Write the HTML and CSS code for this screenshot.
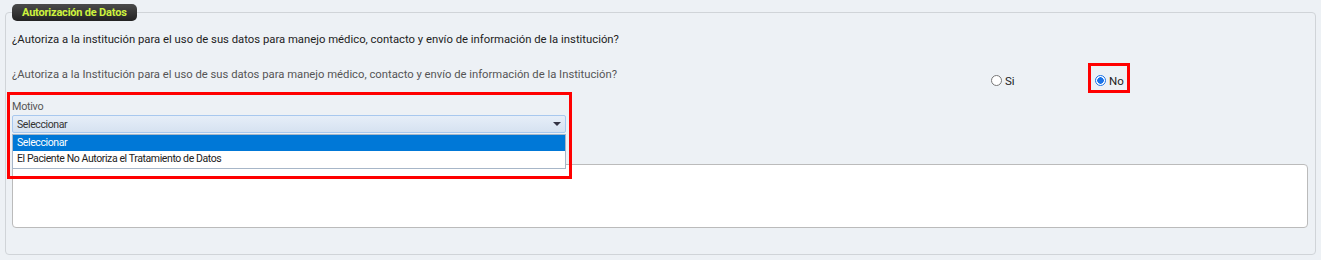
FILE: index.html
```html
<!DOCTYPE html>
<html lang="es">
<head>
    <meta charset="UTF-8">
    <meta name="viewport" content="width=device-width, initial-scale=1.0">
    <title>Autorización de Datos</title>
    <link rel="stylesheet" href="styles.css">
</head>
<body>
    <fieldset class="panel">
        <legend class="panel-title">Autorización de Datos</legend>

        <p class="question">¿Autoriza a la institución para el uso de sus datos para manejo médico, contacto y envío de información de la institución?</p>

        <div class="consent-row">
            <span class="consent-text">¿Autoriza a la Institución para el uso de sus datos para manejo médico, contacto y envío de información de la Institución?</span>
            <div class="options">
                <label class="option"><span class="radio"></span>Si</label>
                <label class="option option-marked"><span class="radio checked"></span>No</label>
            </div>
        </div>

        <div class="motivo">
            <div class="mark"></div>
            <label class="field-label">Motivo</label>
            <div class="select">
                <span>Seleccionar</span>
                <span class="caret"></span>
            </div>
            <ul class="dropdown">
                <li class="active">Seleccionar</li>
                <li>El Paciente No Autoriza el Tratamiento de Datos</li>
            </ul>
        </div>

        <textarea class="notes"></textarea>
    </fieldset>
</body>
</html>
```

FILE: styles.css
```css
body {
    font-family: Roboto, "Liberation Sans", Arial, sans-serif;
    background-color: #edf1f5;
    margin: 0;
    padding: 0;
}
.panel {
    margin: 4px 5px 0 5px;
    padding: 0 7px 26px 6px;
    border: 1px solid #d0d4d8;
    border-radius: 4px;
    background-color: #edf1f5;
}
.panel-title {
    height: 17px;
    box-sizing: border-box;
    padding: 0 10px;
    border-radius: 5px;
    background: linear-gradient(#4a4a4a, #222);
    color: #cdf23d;
    font-size: 11px;
    font-weight: bold;
    line-height: 17px;
    letter-spacing: -0.2px;
}
.question {
    margin: 12px 0 0 0;
    font-size: 11.3px;
    line-height: 14px;
    color: #222;
}
.consent-row {
    display: flex;
    align-items: flex-start;
    margin-top: 16px;
    height: 30px;
}
.consent-text {
    flex: 1;
    margin-top: 5px;
    font-size: 11.25px;
    line-height: 14px;
    color: #555;
}
.options {
    display: flex;
    width: 317px;
}
.option {
    position: relative;
    display: flex;
    align-items: center;
    gap: 3px;
    height: 30px;
    padding-top: 5px;
    box-sizing: border-box;
    font-size: 11.5px;
    color: #222;
    width: 104px;
}
.option-marked::after {
    content: "";
    position: absolute;
    left: -7px;
    top: 0;
    width: 42px;
    height: 30px;
    box-sizing: border-box;
    border: 3px solid #f00;
}
.radio {
    width: 11px;
    height: 11px;
    box-sizing: border-box;
    border: 1px solid #777;
    border-radius: 50%;
    background: #fff;
}
.radio.checked {
    border-color: #1a73e8;
    background: radial-gradient(circle, #1a73e8 0 3px, #fff 3.5px);
}
.motivo {
    position: relative;
    width: 554px;
    margin-top: 7px;
    height: 64px;
}
.mark {
    position: absolute;
    left: -5px;
    top: -8px;
    width: 565px;
    height: 87px;
    box-sizing: border-box;
    border: 3px solid #f00;
    z-index: 2;
}
.field-label {
    display: block;
    font-size: 10.8px;
    line-height: 14px;
    letter-spacing: -0.3px;
    color: #555;
}
.select {
    display: flex;
    justify-content: space-between;
    align-items: center;
    height: 18px;
    box-sizing: border-box;
    margin-top: 1px;
    padding: 0 4px 0 4px;
    border: 1px solid #a8c8ee;
    border-radius: 2px;
    background: linear-gradient(#e6eef8, #d6e2f1);
    font-size: 10.5px;
    letter-spacing: -0.4px;
    color: #333;
}
.caret {
    width: 0;
    height: 0;
    border-left: 4px solid transparent;
    border-right: 4px solid transparent;
    border-top: 4px solid #334;
}
.dropdown {
    position: absolute;
    left: 0;
    top: 34px;
    width: 552px;
    margin: 0;
    padding: 0 0 1px 0;
    list-style: none;
    background: #fff;
    border: 1px solid #a7b6c8;
    z-index: 1;
}
.dropdown li {
    height: 16px;
    line-height: 16px;
    padding-left: 4px;
    font-size: 10.5px;
    letter-spacing: -0.4px;
    color: #222;
}
.dropdown li.active {
    background: #0078d7;
    color: #fff;
}
.notes {
    display: block;
    width: 100%;
    height: 64px;
    box-sizing: border-box;
    margin: 0;
    border: 1px solid #bbb;
    border-radius: 4px;
    background: #fff;
    resize: none;
}
```
